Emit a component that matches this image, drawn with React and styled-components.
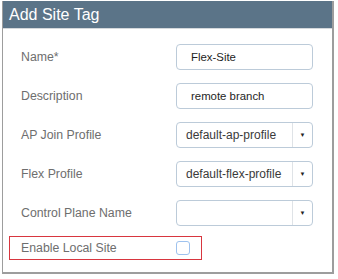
import React from "react";
import styled, { createGlobalStyle } from "styled-components";

const Global = createGlobalStyle`
  html, body {
    margin: 0;
    padding: 0;
    background: #ffffff;
    font-family: "Liberation Sans", Arial, sans-serif;
  }
`;

const Panel = styled.div`
  margin: 1px 2px 0 2px;
  width: 332px;
  height: 273px;
  border: 1px solid #9d9d9d;
  border-top: none;
  border-bottom-width: 2px;
  border-right-width: 2px;
  box-sizing: border-box;
  background: #fff;
`;

const Header = styled.div`
  height: 27px;
  line-height: 28px;
  padding-left: 6px;
  background: #5b7488;
  color: #ffffff;
  font-size: 16px;
  border-bottom: 1px solid #d4d8dc;
`;

const Form = styled.div`
  display: flex;
  flex-direction: column;
  gap: 13px;
  padding: 15px 0 0 6px;
`;

const Row = styled.div`
  display: flex;
  align-items: center;
  height: 26px;
  padding-left: 12px;
`;

const HighlightRow = styled.div`
  display: flex;
  align-items: center;
  width: 193px;
  height: 24px;
  margin-top: -3px;
  padding-left: 11px;
  box-sizing: border-box;
  border: 1px solid #d8363f;
`;

const Label = styled.div`
  width: 155px;
  flex-shrink: 0;
  font-size: 12.3px;
  color: #6e6e6e;
`;

const TextBox = styled.div`
  width: 137px;
  height: 26px;
  box-sizing: border-box;
  border: 1px solid #bccbd9;
  border-radius: 4px;
  padding-left: 14px;
  display: flex;
  align-items: center;
  font-size: 11.4px;
  color: #1e1e1e;
`;

const SelectBox = styled.div`
  width: 137px;
  height: 26px;
  box-sizing: border-box;
  border: 1px solid #bccbd9;
  border-radius: 4px;
  display: flex;
  align-items: stretch;
  font-size: 12px;
  color: #3a3a3a;
`;

const SelectValue = styled.div`
  flex: 1;
  padding: 5px 0 0 9px;
  white-space: nowrap;
  overflow: hidden;
`;

const Arrow = styled.div`
  width: 19px;
  border-left: 1px solid #dfe3e7;
  display: flex;
  align-items: center;
  justify-content: center;
  font-size: 6px;
  color: #222;
`;

const Check = styled.div`
  width: 14px;
  height: 14px;
  box-sizing: border-box;
  border: 1px solid #9ec2ee;
  border-radius: 3px;
`;

const Select = ({ value }) => (
  <SelectBox>
    <SelectValue>{value}</SelectValue>
    <Arrow>▼</Arrow>
  </SelectBox>
);

export default function App() {
  return (
    <>
      <Global />
      <Panel>
        <Header>Add Site Tag</Header>
        <Form>
          <Row>
            <Label>Name*</Label>
            <TextBox>Flex-Site</TextBox>
          </Row>
          <Row>
            <Label>Description</Label>
            <TextBox>remote branch</TextBox>
          </Row>
          <Row>
            <Label>AP Join Profile</Label>
            <Select value="default-ap-profile" />
          </Row>
          <Row>
            <Label>Flex Profile</Label>
            <Select value="default-flex-profile" />
          </Row>
          <Row>
            <Label>Control Plane Name</Label>
            <Select value="" />
          </Row>
          <HighlightRow>
            <Label>Enable Local Site</Label>
            <Check />
          </HighlightRow>
        </Form>
      </Panel>
    </>
  );
}
